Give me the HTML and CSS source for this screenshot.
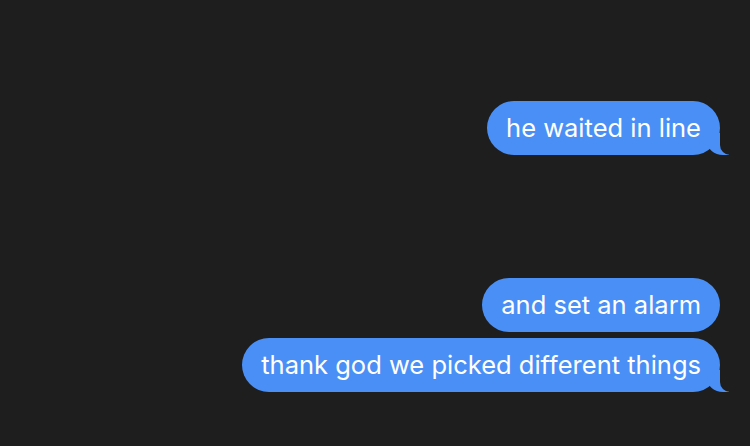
FILE: index.html
```html
<!DOCTYPE html>
<html lang="en">
  <head>
    <meta charset="UTF-8" />
    <meta name="viewport" content="width=device-width, initial-scale=1.0" />
    <title>Messages</title>
    <link rel="stylesheet" href="styles.css">
  </head>
  <body>
    <main class="thread">
      <div class="group">
        <p class="bubble tail">he waited in line</p>
      </div>
      <div class="group">
        <p class="bubble">and set an alarm</p>
        <p class="bubble tail">thank god we picked different things</p>
      </div>
    </main>
  </body>
</html>
```

FILE: styles.css
```css
body {
  margin: 0;
  background: #1e1e1e;
  font-family: Inter, "Noto Sans", sans-serif;
}

.thread {
  display: flex;
  flex-direction: column;
  align-items: flex-end;
  gap: 123.5px;
  padding: 101px 30px 0 0;
}

.group {
  display: flex;
  flex-direction: column;
  align-items: flex-end;
  gap: 6.5px;
}

.bubble {
  position: relative;
  margin: 0;
  padding: 12px 19px 12px 19.5px;
  line-height: 29.5px;
  font-size: 25.5px;
  color: #fff;
  background: #4a8ff5;
  border-radius: 27px;
}

/* the little curl on the last bubble of a group */
.tail::before {
  content: "";
  position: absolute;
  bottom: 0;
  right: -9px;
  width: 22px;
  height: 22px;
  background: #4a8ff5;
  border-bottom-left-radius: 16px 14px;
}

.tail::after {
  content: "";
  position: absolute;
  bottom: 0;
  right: -26px;
  width: 26px;
  height: 24px;
  background: #1e1e1e;
  border-bottom-left-radius: 10px;
}
```
